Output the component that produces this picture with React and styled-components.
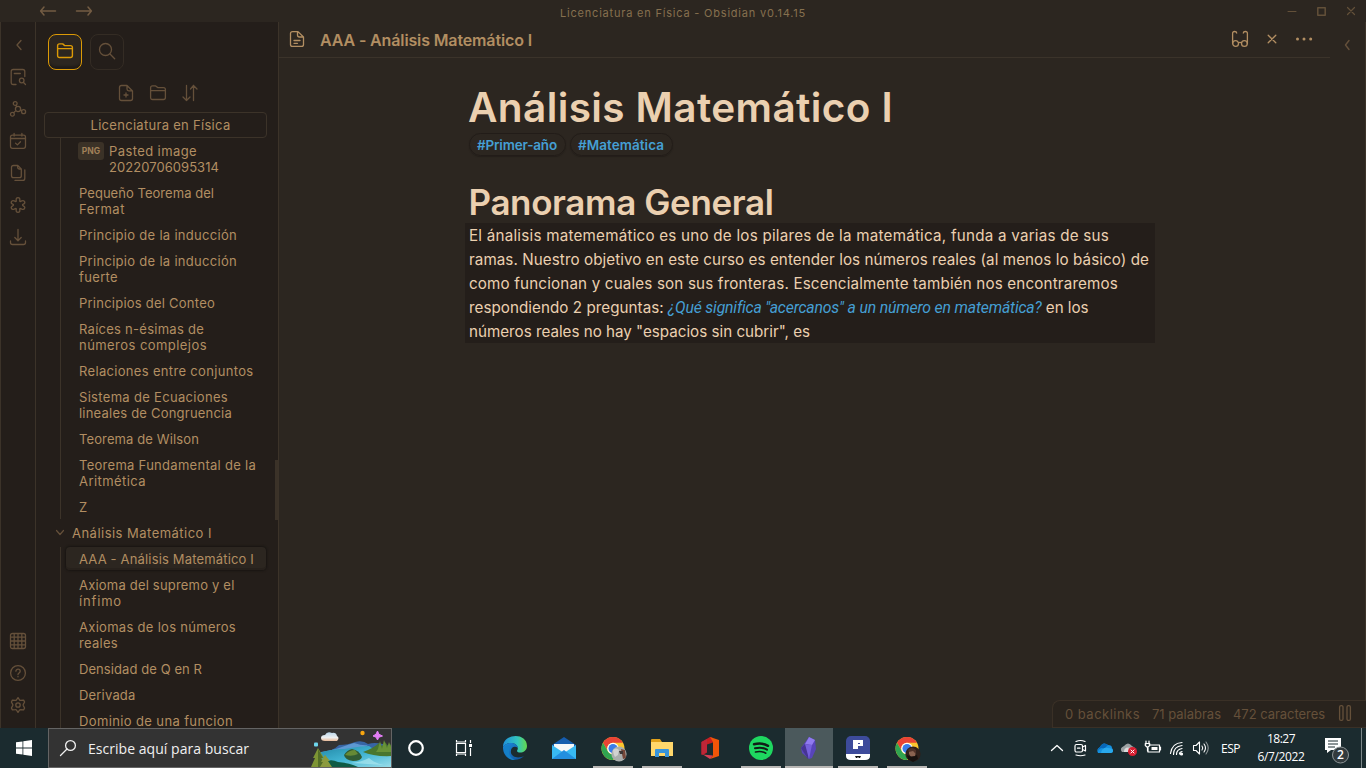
import React, { useLayoutEffect, useRef, useState } from "react";
import styled, { createGlobalStyle, css } from "styled-components";

const c = {
  main: "#2c2620",
  side: "#241e1a",
  line: "#3c3329",
  text: "#b28e62",
  faint: "#65503a",
  bright: "#ebd0b0",
  blue: "#459fd3",
  gold: "#dc9a06",
  task: "#1b2b2f",
};

const Global = createGlobalStyle`
  * { box-sizing: border-box; }
  body { margin: 0; background: ${c.main}; overflow: hidden; font-family: Inter, "Liberation Sans", sans-serif; }
  svg { display: block; flex: none; overflow: visible; }
`;

/* Text tracked so that its run takes the given width. */
const Run = styled.span`
  display: inline-block;
  white-space: pre;
`;
function Fit({ w, children }) {
  const ref = useRef(null);
  const [space, setSpace] = useState(0);
  useLayoutEffect(() => {
    const natural = ref.current.getBoundingClientRect().width;
    setSpace((w - natural) / children.length);
  }, []);
  return <Run ref={ref} style={{ letterSpacing: space }}>{children}</Run>;
}

const Screen = styled.div`
  width: 1366px; height: 768px; display: flex; flex-direction: column; overflow: hidden;
`;
const TitleBar = styled.header`
  height: 22px; flex: none; display: grid; grid-template-columns: 1fr auto 1fr; align-items: center;
  color: #86704f; background: ${c.main};
`;
const TitleArrows = styled.div`
  display: flex; gap: 20px; padding-left: 40px; color: #735c43;
`;
const TitleText = styled.div`
  font-size: 11px; line-height: 14px; padding-top: 4px;
`;
const WindowButtons = styled.div`
  display: flex; justify-content: flex-end; align-items: center; gap: 21px; padding-right: 11px; color: #635039;
`;
const Workspace = styled.div`
  height: 706px; flex: none; display: flex;
`;
const Ribbon = styled.nav`
  width: 36px; flex: none; display: flex; flex-direction: column; justify-content: space-between;
  background: ${c.side}; border-left: 1px solid ${c.line}; border-right: 1px solid ${c.line};
  padding: 15px 0 15px; color: ${c.faint};
`;
const RibbonGroup = styled.div`
  display: flex; flex-direction: column; align-items: center; gap: 16px;
`;
const Sidebar = styled.aside`
  width: 243px; flex: none; display: flex; flex-direction: column;
  background: ${c.side}; border-right: 1px solid ${c.line}; color: ${c.text};
`;
const Tabs = styled.div`
  display: flex; gap: 8px; padding: 12px 12px 0;
`;
const Tab = styled.button`
  width: 34px; height: 36px; padding: 0; display: grid; place-items: center; border-radius: 8px;
  background: ${p => (p.$on ? c.main : "transparent")};
  color: ${p => (p.$on ? c.gold : c.faint)};
  border: 1px solid ${p => (p.$on ? c.gold : "#342c24")};
  box-shadow: ${p => (p.$on ? "inset 0 -4px 2px -1px #211c18" : "none")};
  svg { margin-top: -2px; }
`;
const Actions = styled.div`
  display: flex; gap: 16px; padding: 15px 0 0 82px; color: ${c.faint};
`;
const Vault = styled.div`
  height: 26px; margin: 11px 11px 0 8px; flex: none; padding-left: 10px; text-align: center;
  border: 1px solid ${c.line}; border-radius: 4px; font-size: 13px; line-height: 24px;
`;
const TreeArea = styled.div`
  flex: 1; min-height: 0; overflow: hidden; display: flex; justify-content: space-between;
`;
const Tree = styled.div`
  width: 230px; margin-top: -1px; font-size: 13px; line-height: 16px;
`;
const Branch = styled.div`
  margin-left: 24px; border-left: 1px solid ${c.line}; padding-left: 5px;
`;
const Item = styled.div`
  padding: 6px 0 4px 13px; display: flex; flex-direction: column; align-items: flex-start;
  ${p => p.$on && css`
    margin: 2px 0 1px; padding: 4px 0 3px 13px; border-radius: 4px; background: ${c.main};
    box-shadow: 0 0 2px 1px #191512, inset 0 -2px 0 #27211c;
  `}
`;
const ImageItem = styled.div`
  display: flex; gap: 5px; padding: 5px 0 5px 12px;
`;
const Lines = styled.div`
  display: flex; flex-direction: column; align-items: flex-start; padding-top: 1px; margin-bottom: -1px;
`;
const Badge = styled.span`
  width: 26px; height: 18px; border-radius: 3px; background: #3b3227; color: #a08058;
  font-size: 8.5px; font-weight: 700; line-height: 18px; text-align: center;
`;
const Folder = styled.div`
  height: 26px; display: flex; align-items: center; gap: 8px; padding-left: 20px;
  svg { color: ${c.faint}; }
  span { padding-top: 1px; }
`;
const Thumb = styled.div`
  width: 3px; height: 60px; margin-top: 322px; background: #3b3228;
`;
const Pane = styled.main`
  width: 1051px; flex: none; display: flex; flex-direction: column;
`;
const PaneHeader = styled.div`
  height: 36px; flex: none; display: flex; align-items: center; justify-content: space-between;
  border-bottom: 1px solid #3b332a; color: ${c.text}; padding: 0 18px 0 10px;
`;
const PaneTitle = styled.div`
  display: flex; align-items: center; gap: 15px; font-size: 16px; font-weight: 600; line-height: 20px;
  svg { margin-top: -2px; }
  span { margin-top: 1px; }
`;
const PaneActions = styled.div`
  display: flex; align-items: center; gap: 16px; margin-top: -1px;
`;
const Note = styled.article`
  padding: 26px 0 0 186px; color: ${c.bright};
`;
const H1 = styled.h1`
  margin: 0 0 0 3px; font-size: 40.5px; font-weight: 600; line-height: 48px; height: 49px;
`;
const H2 = styled.h2`
  margin: 23px 0 0 3.5px; font-size: 35px; font-weight: 600; line-height: 47px; height: 44px;
`;
const Tags = styled.div`
  display: flex; gap: 4px; padding-left: 4px;
`;
const Tag = styled.a`
  height: 23px; padding: 0 8px 0 7px; border: 1px solid #221c18; border-radius: 12px; line-height: 22px;
  font-size: 13.5px; font-weight: 600; color: ${c.blue}; box-shadow: 0 1px 1px #241f1a;
`;
const Paragraph = styled.div`
  width: 690px; height: 120px; padding: 1px 0 0 4px; background: ${c.side}; font-size: 15.2px; line-height: 24px;
  > div { height: 24px; display: flex; }
  em { color: ${c.blue}; font-family: Roboto, "Liberation Sans", sans-serif; font-size: 15.8px; }
`;
const RightStrip = styled.aside`
  width: 36px; flex: none; display: flex; justify-content: flex-end; padding: 17px 13px 0 0;
  border-right: 1px solid ${c.line}; color: ${c.faint};
`;
const Status = styled.footer`
  position: absolute; left: 1052px; top: 700px; width: 314px; height: 28px; display: flex; align-items: center;
  padding: 0 0 1px 12px; gap: 12px; border: 1px solid #3a3026; border-right: 0; border-radius: 8px 0 0 0;
  background: #29231d; color: ${c.faint}; font-size: 13px;
  svg { margin: -1px 0 0 2px; }
`;
const Taskbar = styled.div`
  height: 40px; flex: none; display: flex; background: ${c.task}; color: #fff;
  font-family: "Open Sans", "Noto Sans", sans-serif;
`;
const Start = styled.div`
  width: 48px; display: grid; place-items: center;
`;
const Search = styled.div`
  width: 344px; height: 40px; display: flex; align-items: center; background: #333; border: 1px solid #646464;
  padding-left: 11px; gap: 12px; font-size: 14px; color: #f0f0f0; overflow: hidden;
  > svg:last-child { margin-left: auto; }
`;
const Apps = styled.div`
  display: flex; width: 539px;
`;
const AppButton = styled.div`
  width: ${p => p.$w}px; display: flex; flex-direction: column; align-items: center; justify-content: space-between;
  padding-top: 8px; background: ${p => (p.$active ? "#4b595c" : "transparent")};
`;
const Underline = styled.i`
  width: ${p => (p.$full ? 48 : 40)}px; height: 2px; background: ${p => (p.$show ? "#b9b7b5" : "transparent")};
`;
const Tray = styled.div`
  margin-left: auto; display: flex; align-items: center; font-size: 12px;
`;
const TrayIcons = styled.div`
  display: flex; gap: 8px; padding-right: 12px;
`;
const Clock = styled.div`
  width: 82px; display: flex; flex-direction: column; align-items: center; line-height: 18px; font-size: 12px;
`;
const Notify = styled.div`
  width: 39px; padding-left: 2px;
`;
const Desktop = styled.i`
  width: 5px; height: 40px; border-left: 1px solid #7c8789;
`;

const Icon = ({ size = 16, w = size, h = size, sw = 1.3, vb, children }) => (
  <svg width={w} height={h} viewBox={vb || `0 0 ${w} ${h}`} fill="none" stroke="currentColor"
    strokeWidth={sw} strokeLinecap="round" strokeLinejoin="round">{children}</svg>
);
const FolderShape = () => <path d="M.6 12.5V2.8Q.6.9 2.5.9h3.2l2 1.7h5.8q1.9 0 1.9 1.9v8q0 2-2 2H2.6q-2 0-2-2ZM.6 5.6h14.8" />;
const Chevron = () => <Icon><path d="M11 3.5 7 8l4 4.5" /></Icon>;
const Close = ({ s = 8 }) => <Icon w={s} h={s} sw={1.2}><path d={`M.5.5l${s - 1} ${s - 1}M${s - 0.5}.5l-${s - 1} ${s - 1}`} /></Icon>;

const topTools = [
  <path d="M6 15.5H3.2q-2 0-2-2v-11q0-2 2-2h9.6q2 0 2 2v5M4.3 4.5h6M13.3 13.3l2.2 2.2M14 11.5a2.3 2.3 0 1 1-4.6 0 2.3 2.3 0 0 1 4.6 0Z" />,
  <path d="M7.1 2.5a1.9 1.9 0 1 1-3.8 0 1.9 1.9 0 0 1 3.8 0ZM10.6 8a2.6 2.6 0 1 1-5.2 0 2.6 2.6 0 0 1 5.2 0ZM4.3 13.3a1.9 1.9 0 1 1-3.8 0 1.9 1.9 0 0 1 3.8 0ZM15.6 10.7a2 2 0 1 1-4 0 2 2 0 0 1 4 0ZM6 4.2l.8 1.5M5.9 9.6l-2.2 2.2M10.5 8.7l1.3.9" />,
  <path d="M2.5 2.1h11q2 0 2 2v9q0 2.2-2 2.2h-11q-2 0-2-2.2v-9q0-2 2-2ZM.6 5.5h14.8M4.1.5v2.6M11.9.5v2.6M5.5 10.1l1.9 1.8 3.1-3.2" />,
  <path d="M3.5.5h4.3l3.5 3.4v7q0 1.8-2 1.8H3.5q-2 0-2-2V2.5q0-2 2-2ZM7.7.6v2q0 1.4 1.4 1.4h2M14.8 4.8v8.4q0 2.2-2 2.2H5" />,
  <path d="M8 .7c1.6 0 2 1.1 1.8 2.4-.2 1-.1 1.7.8 1.3l1.2-.6c3-1 4.1 2.3 1.5 3.4-1.1.4-1.1 1.1 0 1.6 2.6 1.2 1.5 4.3-1.5 3.4l-1.2-.6c-.9-.4-1 .3-.8 1.3.2 1.3-.2 2.4-1.8 2.4s-2-1.1-1.8-2.4c.2-1 .1-1.7-.8-1.3l-1.2.6c-3 .9-4.1-2.2-1.5-3.4 1.1-.5 1.1-1.2 0-1.6C.1 6.1 1.2 2.8 4.2 3.8l1.2.6c.9.4 1-.3.8-1.3C6 1.8 6.4.7 8 .7Z" />,
  <path d="M8 .5v11M4.8 8.5 8 11.7l3.2-3.2M.5 12v1.5q0 2 2 2h11q2 0 2-2V12" />,
];
const bottomTools = [
  <path d="M2.5.5h11q2 0 2 2v11q0 2-2 2h-11q-2 0-2-2v-11q0-2 2-2ZM4.2.5v15M8 .5v15M11.8.5v15M.5 4.2h15M.5 8h15M.5 11.8h15" />,
  <><circle cx="8" cy="8" r="7.4" /><path d="M5.9 6.2c0-2.7 4.3-2.6 4.3 0 0 1.7-2.2 1.7-2.2 3.3M8 11.5v.3" /></>,
  <><path d="M8 .6 9.6 3q.4.5 1 .4l3-.3 1 1.9-1.3 2.4q-.3.6 0 1.2l1.3 2.4-1 1.9-3-.3q-.6 0-1 .4L8 15.4 6.4 13q-.4-.5-1-.4l-3 .3-1-1.9 1.3-2.4q.3-.6 0-1.2L1.4 5l1-1.9 3 .3q.6 0 1-.4Z" /><circle cx="8" cy="8" r="2.2" /></>,
];

const firstBranch = [
  [["Pequeño Teorema del", 135], ["Fermat", 46]],
  [["Principio de la inducción", 158]],
  [["Principio de la inducción", 158], ["fuerte", 39]],
  [["Principios del Conteo", 136]],
  [["Raíces n-ésimas de", 125], ["números complejos", 128]],
  [["Relaciones entre conjuntos", 174.5]],
  [["Sistema de Ecuaciones", 149], ["lineales de Congruencia", 153]],
  [["Teorema de Wilson", 120]],
  [["Teorema Fundamental de la", 177], ["Aritmética", 67]],
  [["Z", 9]],
];
const secondBranch = [
  [["AAA - Análisis Matemático I", 175]],
  [["Axioma del supremo y el", 155.5], ["ínfimo", 43]],
  [["Axiomas de los números", 157], ["reales", 39]],
  [["Densidad de Q en R", 123]],
  [["Derivada", 56.5]],
  [["Dominio de una funcion", 154]],
];
const NoteItem = ({ lines, on }) => (
  <Item $on={on}>{lines.map(([t, w]) => <Fit key={t} w={w}>{t}</Fit>)}</Item>
);

const Landscape = () => (
  <svg width="78" height="38" viewBox="0 0 78 38">
    <defs>
      <linearGradient id="water" x1="0" y1="0" x2="1" y2="1"><stop offset="0" stopColor="#2187a5" /><stop offset=".5" stopColor="#42b5d3" /><stop offset="1" stopColor="#9bdeea" /></linearGradient>
      <linearGradient id="cloud" x1="0" y1="0" x2="0" y2="1"><stop stopColor="#b9d6ea" /><stop offset=".6" stopColor="#eceff0" /><stop offset="1" stopColor="#e8b997" /></linearGradient>
    </defs>
    <path d="M8 24q12-2 18-8 9 0 16-3 8-2 13 2 11-3 25 4v19H4Z" fill="#3765a4" />
    <path d="M8 23q12-2 18-4 8-3 15-5 9 3 14 2l-9 6-16 3-22 3Z" fill="#5d98d2" />
    <path d="M6 24q12-4 25-4 18-3 25-3l10 7 14 1v13H8Z" fill="url(#water)" />
    <path d="M50 23q11-4 16-9l3 3 3-4 3 4 5-3v13q-19 1-30-4Z" fill="#49762e" />
    <path d="M65 20l2-8 2 8 2-9 3 8 2-6 2 5v5H63Z" fill="#699238" />
    <path d="M31 26q3-5 8-6 7 1 10 8-1 4-9 4-8-1-9-6Z" fill="#315b34" /><path d="M32 26q4-5 10-5l3 4q-6 3-13 1Z" fill="#668a36" />
    <path d="M38 34q11-1 18-5 5 5 15 7Z" fill="#ade8ef" opacity=".65" />
    <path d="M8 38q6-10 17-5 12 1 20 5Z" fill="#0e5b45" />
    <path d="M5 19 0 29h2l-4 9h15l-4-9h2ZM12 26l-5 12h10Z" fill="#7d9434" /><path d="M5 20v18h8L8 29h2Z" fill="#536e28" />
    <path d="M12 26 8 33h2l-3 5h12l-4-6h2Z" fill="#8b9a3d" />
    <path d="M12 12q-4 0-4-3t4-3q2-4 7-2 4-1 5 3 3 2 0 5Z" fill="url(#cloud)" />
    <circle cx="49.5" cy="4" r="2.2" fill="#f8a610" /><rect x="1" y="13.5" width="4" height="4" rx="1" fill="#6ed6ec" />
    <path d="m64.5 2 1.4 3.200 3.600 1.800-3.600 1.200L64.500 11l-1.400-2.800L60 7l3-1.800Z" fill="#e37df5" stroke="#e37df5" strokeLinejoin="round" />
  </svg>
);
const Chrome = ({ person }) => (
  <svg width="24" height="26" viewBox="0 0 24 26">
    <circle cx="12" cy="12.5" r="11.5" fill="#fbc52e" />
    <path d="M2 6.800A11.500 11.500 0 0 1 22 6.800H12a5.700 5.700 0 0 0-5 8.500Z" fill="#e94335" />
    <path d="M2 6.800a11.500 11.500 0 0 0 10 17.200l5-8.600a5.700 5.700 0 0 1-10 0Z" fill="#30a451" />
    <circle cx="12" cy="12.5" r="5.8" fill="#fff" /><circle cx="12" cy="12.5" r="4.5" fill="#3b7de9" />
    {person === "pale" ? <><circle cx="18" cy="18" r="7.6" fill="#aaaead" /><path d="M12 14q3-3 6 0l-1 5-3 2q-2-3-2-7Z" fill="#d1d2d0" /><path d="M20 13l4 1 1 8-3 1-1-5Z" fill="#754638" /><path d="M18 15h4v3h-3Z" fill="#3f3634" /></>
      : <><circle cx="18" cy="18" r="7.6" fill="#30201b" /><path d="M14 14l5-1 2 3-1 4-4 1-2-3Z" fill="#8a6250" /><path d="M12 19q5 3 10 0l1 4-5 3-5-3Z" fill="#17110f" /><path d="M13 14q4-4 8 0v4l-3-3-4 1Z" fill="#503228" /></>}
  </svg>
);
const appIcons = [
  { w: 48, icon: <svg width="24" height="24"><circle cx="12" cy="12" r="6.8" fill="none" stroke="#fff" strokeWidth="2.2" /></svg> },
  { w: 48, icon: <svg width="24" height="24" fill="none" stroke="#fff" strokeWidth="1.2"><path d="M4.500 7.500h9v9h-9ZM4.500 4v2h9V4M4.500 20v-2h9v2M18.500 4v3M18.500 12v8" /><path d="M17 8h3v3h-3Z" fill="#fff" stroke="none" /></svg> },
  { w: 54, icon: <svg width="24" height="24" viewBox="0 0 24 24"><defs><linearGradient id="edgeTop" x1="0" x2="1"><stop stopColor="#1f8fda" /><stop offset=".6" stopColor="#32c5be" /><stop offset="1" stopColor="#64d84c" /></linearGradient><linearGradient id="edgeLow" x1="0" x2="1" y2="1"><stop stopColor="#1a8bdd" /><stop offset="1" stopColor="#114f98" /></linearGradient></defs><path d="M0 11C0-3 24-4 24 10c0 7-9 8-10 5 4-7-8-12-14-4Z" fill="url(#edgeTop)" /><path d="M0 11c4-6 14-5 15 1-4-3-8 0-7 5 1 4 7 6 13 3-5 6-21 6-21-9Z" fill="url(#edgeLow)" /><path d="M7 11c-3 7 1 12 6 13C5 25 1 18 1 12c2-3 5-3 6-1Z" fill="#147fc7" /></svg> },
  { w: 44, icon: <svg width="24" height="24"><path d="M0 9 12 1l12 8v14H0Z" fill="#155daf" /><path d="M2 8h20v9H2Z" fill="#f4f6f8" /><path d="m0 9 12 8 12-8v14H0Z" fill="#38b9f2" /><path d="m0 23 12-9 12 9Z" fill="#238fdf" /></svg> },
  { w: 54, run: 1, icon: <Chrome person="pale" /> },
  { w: 44, run: 1, icon: <svg width="24" height="24"><path d="M1 4q0-1 1-1h8l2 3h10v14H1Z" fill="#e0a11a" /><path d="M1 6h22v14H1Z" fill="#ffd76b" /><path d="M5 14q0-1 1-1h12q1 0 1 1v7h-4v-4H9v4H5Z" fill="#3894db" /></svg> },
  { w: 52, icon: <svg width="24" height="24"><path d="m3.500 6 8.500-5 3 1v4.500l-6 2v8l-4 2.500-1.500-1Z" fill="#c51f22" /><path d="m3.500 6 5.500-3v13l-5.500 3Z" fill="#bd2638" /><path d="m12 1 9 3v16l-9 3 3-3.500V6Z" fill="#f05508" /><path d="m5 18.500 10 1-3 3.500Z" fill="#d64055" /></svg> },
  { w: 49, run: 1, icon: <svg width="24" height="24" fill="none" stroke="#111d17" strokeLinecap="round"><circle cx="12" cy="12" r="12" fill="#1ed760" stroke="none" /><path d="M5 8.300q8-2 14 1.500" strokeWidth="2.5" /><path d="M6 12.300q7-1.700 12 1.400" strokeWidth="2" /><path d="M6.500 16q6-1.300 10.300 1.200" strokeWidth="1.6" /></svg> },
  { w: 48, run: 1, active: 1, icon: <svg width="24" height="24"><path d="m12 1 6 3 1 9-4 9-3 1-7-6-1-5Z" fill="#5845ba" /><path d="m12 1-4 7-4 4 7 11Z" fill="#463493" /><path d="m12 1 6 3-3 5-7-1Z" fill="#907af0" /><path d="m8 8 7 1-3 14Z" fill="#7660dc" /></svg> },
  { w: 50, run: 1, icon: <svg width="24" height="24"><rect width="24" height="24" rx="5" fill="#3d4b9b" /><path d="M0 18h24v2q0 4-5 4H5q-5 0-5-4Z" fill="#fff" /><path d="M7 4h10v6h-5v3H7Z" fill="#fff" /><path d="M12 7.500h2" stroke="#3d4b9b" /><path d="M9 20h6l-1 2h-1l-1-1-1 1h-1Z" fill="#111" /></svg> },
  { w: 48, run: 1, icon: <Chrome person="dark" /> },
];

export default function App() {
  return (
    <Screen>
      <Global />
      <TitleBar>
        <TitleArrows>
          <Icon w={16} h={10} sw={1.5}><path d="M4 1 .600 5 4 9M1 5h14.500" /></Icon>
          <Icon w={16} h={10} sw={1.5}><path d="m12 1 3.400 4L12 9M15 5H.500" /></Icon>
        </TitleArrows>
        <TitleText><Fit w={246}>Licenciatura en Física - Obsidian v0.14.15</Fit></TitleText>
        <WindowButtons>
          <Icon w={8} h={8} sw={1}><path d="M0 4.500h8" /></Icon>
          <Icon w={9} h={9} sw={1.5}><path d="M.800.800h7.400v7.400H.800Z" /></Icon>
          <Close />
        </WindowButtons>
      </TitleBar>
      <Workspace>
        <Ribbon>
          <RibbonGroup><Chevron />{topTools.map((t, i) => <Icon key={i}>{t}</Icon>)}</RibbonGroup>
          <RibbonGroup>{bottomTools.map((t, i) => <Icon key={i}>{t}</Icon>)}</RibbonGroup>
        </Ribbon>
        <Sidebar>
          <Tabs>
            <Tab $on><Icon sw={1.4}><FolderShape /></Icon></Tab>
            <Tab><Icon><circle cx="6.5" cy="6.5" r="6" /><path d="m11 11 4.700 4.700" /></Icon></Tab>
          </Tabs>
          <Actions>
            <Icon><path d="M9 .500H3.500q-2 0-2 2v11q0 2 2 2h9q2 0 2-2V6ZM9 .600V4q0 1.800 1.800 1.800h3.500M8 8v4M6 10h4" /></Icon>
            <Icon><FolderShape /></Icon>
            <Icon><path d="M4.500.500v15M1 12l3.500 3.500L8 12M11.500 15.500V.500M8.500 4l3-3.500L15 4" /></Icon>
          </Actions>
          <Vault><Fit w={140}>Licenciatura en Física</Fit></Vault>
          <TreeArea>
            <Tree>
              <Branch>
                <ImageItem><Badge>PNG</Badge><Lines><Fit w={88}>Pasted image</Fit><Fit w={110}>20220706095314</Fit></Lines></ImageItem>
                {firstBranch.map((l, i) => <NoteItem key={i} lines={l} />)}
              </Branch>
              <Folder><Icon w={8} h={5} sw={1.2}><path d="m.500.500 3.500 4 3.500-4" /></Icon><Fit w={140}>Análisis Matemático I</Fit></Folder>
              <Branch>{secondBranch.map((l, i) => <NoteItem key={i} lines={l} on={i === 0} />)}</Branch>
            </Tree>
            <Thumb />
          </TreeArea>
        </Sidebar>
        <Pane>
          <PaneHeader>
            <PaneTitle>
              <Icon><path d="M9 .600H3.500q-2 0-2 2v10.800q0 2 2 2h9q2 0 2-2V6ZM8.500.600V4q0 2 2 2h3.800M5 9.500h6M5 12.300h3.500" /></Icon>
              <Fit w={212}>AAA - Análisis Matemático I</Fit>
            </PaneTitle>
            <PaneActions>
              <Icon><circle cx="3.6" cy="12.5" r="2.9" /><circle cx="12.4" cy="12.5" r="2.9" /><path d="M.600 12.500V2.500q0-2 2-2T4.700 2M15.400 12.500V2.500q0-2-2-2T11.300 2M6.500 11.800q1.500-1 3 0" /></Icon>
              <Icon><path d="m4.200 4.200 7.600 7.600M11.800 4.200l-7.600 7.600" /></Icon>
              <svg width="16" height="4" fill="currentColor"><circle cx="1.5" cy="2" r="1.5" /><circle cx="8" cy="2" r="1.5" /><circle cx="14.7" cy="2" r="1.5" /></svg>
            </PaneActions>
          </PaneHeader>
          <Note>
            <H1><Fit w={425}>Análisis Matemático I</Fit></H1>
            <Tags><Tag><Fit w={80}>#Primer-año</Fit></Tag><Tag><Fit w={86}>#Matemática</Fit></Tag></Tags>
            <H2><Fit w={305}>Panorama General</Fit></H2>
            <Paragraph>
              <div><Fit w={640}>El ánalisis matememático es uno de los pilares de la matemática, funda a varias de sus</Fit></div>
              <div><Fit w={680}>ramas. Nuestro objetivo en este curso es entender los números reales (al menos lo básico) de</Fit></div>
              <div><Fit w={649}>como funcionan y cuales son sus fronteras. Escencialmente también nos encontraremos</Fit></div>
              <div><Fit w={199}>respondiendo 2 preguntas: </Fit><em><Fit w={373}>¿Qué significa "acercanos" a un número en matemática?</Fit></em><Fit w={47}> en los</Fit></div>
              <div><Fit w={341}>números reales no hay "espacios sin cubrir", es</Fit></div>
            </Paragraph>
          </Note>
        </Pane>
        <RightStrip><Icon w={10} h={12} sw={1.4}><path d="M7 1.500 3.500 6 7 10.500" /></Icon></RightStrip>
      </Workspace>
      <Status>
        <Fit w={75}>0 backlinks</Fit><Fit w={69}>71 palabras</Fit><Fit w={92}>472 caracteres</Fit>
        <Icon w={13} h={16}><rect x=".6" y=".6" width="3.4" height="14.8" rx="1.5" /><rect x="8" y=".6" width="3.4" height="14.8" rx="1.5" /></Icon>
      </Status>
      <Taskbar>
        <Start><svg width="16" height="16" fill="#fff"><path d="M0 2.300 6.500 1.400v6.200H0ZM7.300 1.300 16 0v7.600H7.300ZM0 8.400h6.500v6.200L0 13.700ZM7.300 8.400H16V16l-8.700-1.300Z" /></svg></Start>
        <Search>
          <Icon><circle cx="10.5" cy="5.5" r="4.9" /><path d="M7 9 .500 15.500" /></Icon>
          <Fit w={161}>Escribe aquí para buscar</Fit>
          <Landscape />
        </Search>
        <Apps>{appIcons.map((a, i) => <AppButton key={i} $w={a.w} $active={a.active}>{a.icon}<Underline $show={a.run} $full={a.active} /></AppButton>)}</Apps>
        <Tray>
          <TrayIcons>
            <Icon><path d="m2.500 10.500 5.500-5 5.500 5" /></Icon>
            <Icon sw={1.2}><rect x="2" y="4.5" width="7.5" height="7.5" rx="1.5" /><path d="m9.500 7 3-1.500v5.500l-3-1.500M3 1.500Q7.500-.500 12 1.500M3 15q4.500 1.500 9 0M4.500 8.200h2.500" /></Icon>
            <svg width="16" height="16"><path d="M1 13q-2-4 2-6 3-6 8-2 4 0 4 3 3 4-2 5Z" fill="#1490df" /><path d="M3 7q3-6 8-2L7 9q-3-3-6 2 0-3 2-4Z" fill="#0767b8" /><path d="M4 13q1-6 7-5 5 0 5 3 0 2-2 2Z" fill="#29a9ed" /></svg>
            <svg width="16" height="16"><path d="M1 12q-3-4 2-6 4-5 8 0 5 2 3 6Z" fill="#9ca1a3" /><path d="M3 12q0-6 7-4l4 4Z" fill="#dadddd" /><circle cx="11.5" cy="11.5" r="4.5" fill="#d91f32" /><path d="m9.700 9.700 3.600 3.600m0-3.600-3.600 3.600" stroke="#fff" /></svg>
            <Icon sw={1.2}><path d="M5.500 5h9v7H3V8M15.500 7v3M1 1v3M4 1v3M.300 3.500h4.400v2L2.500 7.500.300 5.500ZM2.500 7v4" /><path d="M6.500 7h6v3h-6Z" fill="#fff" stroke="none" /></Icon>
            <Icon sw={1.2}><path d="M10.500 14q0-2 2.500-2.500M7.500 14.500q0-5 5.500-6M4.500 14.500q0-8 8.500-9M1.500 13.500Q3 3 13 2.500" /><circle cx="12.5" cy="14" r="1" fill="#fff" /></Icon>
            <Icon sw={1.1}><path d="M.500 5.500h2.500L6.500 2v12L3 10.500H.500ZM9 6q1.500 2 0 4M11 4q3 4 0 8" /><path d="M13 2q4.500 6 0 12" opacity=".5" /></Icon>
          </TrayIcons>
          <Fit w={19}>ESP</Fit>
          <Clock><Fit w={28}>18:27</Fit><Fit w={47}>6/7/2022</Fit></Clock>
          <Notify><svg width="26" height="26"><path d="M1 3h16v12H7l-4 3v-3H1Z" fill="#fff" /><path d="M4 6h10M4 9h10M4 12h7" stroke={c.task} /><circle cx="16.5" cy="20" r="8" fill="#323a3d" stroke="#8c9496" /><text x="16.5" y="24.3" textAnchor="middle" fontSize="12" fontWeight="600" fill="#fff">2</text></svg></Notify>
          <Desktop />
        </Tray>
      </Taskbar>
    </Screen>
  );
}
